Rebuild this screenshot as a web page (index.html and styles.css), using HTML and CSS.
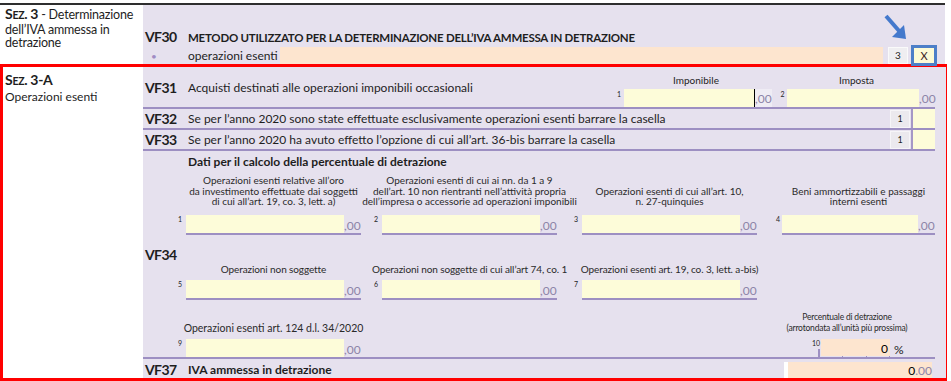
FILE: index.html
```html
<!DOCTYPE html>
<html lang="it">
<head>
  <meta charset="UTF-8">
  <title>Quadro VF - Sez. 3</title>
  <link rel="stylesheet" href="styles.css">
</head>
<body>
<div class="page">

  <div class="sec sec3">
    <div class="side side3">
      <b class="sez">S<span class="sc">EZ</span>. 3</b> - Determinazione<br>dell’IVA ammessa in<br>detrazione
    </div>
    <div class="body body3">
      <div class="r30">
        <span class="code">VF30</span>
        <span class="title">METODO UTILIZZATO PER LA DETERMINAZIONE DELL’IVA AMMESSA IN DETRAZIONE</span>
        <span class="dot">•</span>
        <div class="r30-line">
          <span class="r30-txt">operazioni esenti</span>
          <span class="peach-bar"></span>
          <span class="box-num">3</span>
          <span class="box-x">X</span>
        </div>
      </div>
    </div>
    <svg class="arrow" width="30" height="30" viewBox="0 0 30 30">
      <line x1="6" y1="4" x2="20" y2="20" stroke="#4479cc" stroke-width="4"/>
      <polygon points="26,27 12,25 24,13" fill="#4479cc"/>
    </svg>
  </div>

  <div class="sec sec3a">
    <div class="side side3a">
      <div><b class="sez">S<span class="sc">EZ</span>. 3-A</b></div>
      <div class="side-sub">Operazioni esenti</div>
    </div>
    <div class="body body3a">

      <div class="row r31">
        <span class="code">VF31</span>
        <span class="desc">Acquisti destinati alle operazioni imponibili occasionali</span>
        <div class="grp grp1">
          <div class="grp-head">Imponibile</div>
          <div class="inp">
            <span class="n">1</span>
            <span class="fld fld-cursor"></span>
            <span class="dec">,00</span>
          </div>
        </div>
        <div class="grp grp2">
          <div class="grp-head">Imposta</div>
          <div class="inp">
            <span class="n">2</span>
            <span class="fld"></span>
            <span class="dec">,00</span>
          </div>
        </div>
      </div>

      <div class="row r32">
        <span class="code">VF32</span>
        <span class="desc">Se per l’anno 2020 sono state effettuate esclusivamente operazioni esenti barrare la casella</span>
        <span class="chk-num">1</span>
        <span class="chk"></span>
      </div>

      <div class="row r32">
        <span class="code">VF33</span>
        <span class="desc">Se per l’anno 2020 ha avuto effetto l’opzione di cui all’art. 36-bis barrare la casella</span>
        <span class="chk-num">1</span>
        <span class="chk"></span>
      </div>

      <div class="row r34">
        <div class="r34-head">Dati per il calcolo della percentuale di detrazione</div>

        <div class="fgrid fgrid-a">
          <div class="cell">
            <div class="lbl"><span>Operazioni esenti relative all’oro<br>da investimento effettuate dai soggetti<br>di cui all’art. 19, co. 3, lett. a)</span></div>
            <div class="inp"><span class="n">1</span><span class="box"><span class="fld"></span><span class="dec">,00</span></span></div>
          </div>
          <div class="cell">
            <div class="lbl"><span>Operazioni esenti di cui ai nn. da 1 a 9<br>dell’art. 10 non rientranti nell’attività propria<br>dell’impresa o accessorie ad operazioni imponibili</span></div>
            <div class="inp"><span class="n">2</span><span class="box"><span class="fld"></span><span class="dec">,00</span></span></div>
          </div>
          <div class="cell">
            <div class="lbl"><span>Operazioni esenti di cui all’art. 10,<br>n. 27-quinquies</span></div>
            <div class="inp"><span class="n">3</span><span class="box"><span class="fld"></span><span class="dec">,00</span></span></div>
          </div>
          <div class="cell cell4">
            <div class="lbl"><span>Beni ammortizzabili e passaggi<br>interni esenti</span></div>
            <div class="inp"><span class="n">4</span><span class="box"><span class="fld"></span><span class="dec">,00</span></span></div>
          </div>
        </div>

        <div class="code code34">VF34</div>

        <div class="fgrid fgrid-b">
          <div class="cell">
            <div class="lbl lbl-lg"><span>Operazioni non soggette</span></div>
            <div class="inp"><span class="n">5</span><span class="box"><span class="fld"></span><span class="dec">,00</span></span></div>
          </div>
          <div class="cell">
            <div class="lbl lbl-lg"><span>Operazioni non soggette di cui all’art 74, co. 1</span></div>
            <div class="inp"><span class="n">6</span><span class="box"><span class="fld"></span><span class="dec">,00</span></span></div>
          </div>
          <div class="cell">
            <div class="lbl lbl-lg"><span>Operazioni esenti art. 19, co. 3, lett. a-bis)</span></div>
            <div class="inp"><span class="n">7</span><span class="box"><span class="fld"></span><span class="dec">,00</span></span></div>
          </div>
        </div>

        <div class="fgrid fgrid-c">
          <div class="cell">
            <div class="lbl lbl-lg"><span>Operazioni esenti art. 124 d.l. 34/2020</span></div>
            <div class="inp"><span class="n">9</span><span class="box box-flat"><span class="fld"></span><span class="dec">,00</span></span></div>
          </div>
          <div class="cell"></div>
          <div class="cell"></div>
          <div class="cell cell4">
            <div class="lbl lbl-pct"><span>Percentuale di detrazione<br>(arrotondata all’unità più prossima)</span></div>
            <div class="inp inp-pct">
              <span class="n n-pct">10</span>
              <span class="pct-wrap"><span class="pct-fld">0</span></span>
              <span class="pct-sign">%</span>
            </div>
          </div>
        </div>
      </div>

      <div class="row r37">
        <span class="code">VF37</span>
        <span class="desc desc-b">IVA ammessa in detrazione</span>
        <span class="tot"><span class="tot-int">0</span><span class="tot-dec">.00</span></span>
      </div>

    </div>
  </div>

</div>
</body>
</html>
```

FILE: styles.css
```css
body { margin: 0; background: #fff; font-family: Lato, "Liberation Sans", sans-serif; color: #1e1e1e; }
.page { position: relative; width: 947px; padding-top: 3px; }

.sec { display: grid; grid-template-columns: 143px 1fr; }
.sec3 { width: 945px; height: 59px; border-top: 2px solid #2e2e2e; }
.sec3a {
  box-sizing: border-box;
  width: 947px;
  height: 317px;
  border: 3px solid #ff0000;
  grid-template-columns: 140px 1fr;
}

.side { background: #fff; font-size: 13px; white-space: nowrap; }
.side3 { padding: 2px 0 0 5px; font-size: 12.5px; line-height: 13.5px; letter-spacing: -0.2px; }
.side3a { padding: 5px 0 0 2px; line-height: 16px; }
.side-sub { font-size: 12px; }
.sez { font-size: 14px; letter-spacing: -0.3px; }
.sc { font-size: 10.5px; }

.body { background: #e6e1ee; }
.code { font-weight: bold; font-size: 14px; line-height: 16px; padding-left: 2px; letter-spacing: -0.6px; }

/* section 3 */
.body3 { padding-top: 22px; }
.r30 {
  display: grid;
  grid-template-columns: 45px 1fr;
  grid-template-rows: 20px 17px;
  align-items: center;
}
.r30 .title { font-weight: bold; font-size: 11.5px; letter-spacing: -0.25px; }
.dot { color: #a08cc4; font-size: 10px; padding-left: 8px; }
.r30-line { display: flex; align-items: stretch; height: 17px; }
.r30-txt { width: 92px; font-size: 12px; line-height: 17px; }
.peach-bar { width: 603px; background: #fde5cf; }
.box-num {
  width: 18px;
  margin-left: 5px;
  background: #efeef1;
  border: 1px solid #fafafa;
  font-size: 10px;
  text-align: center;
  line-height: 15px;
}
.box-x {
  width: 20px;
  height: 15px;
  margin: -2px 0 -3px 3px;
  background: #fdfbd6;
  border: 3px solid #4d7fc8;
  font-size: 11px;
  text-align: center;
  line-height: 16px;
  color: #3b2222;
}
.arrow { position: absolute; left: 880px; top: 12px; }

/* section 3-A */
.body3a { padding-right: 11px; display: flex; flex-direction: column; }
.row { display: flex; border-bottom: 2px solid #9d8fc2; }
.row > .code { width: 43px; flex: none; }
.desc { flex: 1; font-size: 12px; line-height: 16px; }
.desc-b { font-weight: bold; }

.r31 { height: 40px; }
.r31 .code, .r31 .desc { padding-top: 13px; }
.grp { display: flex; flex-direction: column; }
.grp1 { width: 164px; }
.grp2 { width: 157px; }
.grp-head { font-size: 10px; line-height: 12px; text-align: center; margin-top: 7px; }
.grp .inp { margin-top: auto; display: flex; height: 18px; }
.grp .n { width: 10px; font-size: 7px; line-height: 10px; text-align: center; }
.grp2 .n { width: 9px; }
.grp .fld { background: #fdfcd9; width: 130px; }
.grp2 .fld { width: 132px; }
.fld-cursor { border-right: 1px solid #000; }
.grp .dec { width: 17px; background: #efecf4; font-size: 12px; line-height: 20px; color: #8c84a8; }
.grp2 .dec { width: 16px; background: none; }

.r32 { height: 19px; align-items: center; }
.r32 .desc { line-height: 19px; }
.chk-num {
  width: 18px;
  height: 16px;
  background: #ebe9ee;
  border: 1px solid #f6f5f8;
  font-size: 9px;
  line-height: 16px;
  text-align: center;
}
.chk { align-self: stretch; width: 22px; margin-left: 1px; background: #fdfcd9; border-left: 2px solid #a597c6; }

.r34 { height: 206px; flex-direction: column; }
.r34-head { padding: 3px 0 0 45px; font-weight: bold; font-size: 12px; line-height: 16px; height: 16px; }

.fgrid {
  display: grid;
  grid-template-columns: 196px 200px 204px 1fr;
  padding-left: 33px;
  align-items: end;
}
.fgrid-a { margin-top: 5px; }
.fgrid-c { margin-top: auto; }
.cell { display: flex; flex-direction: column; }
.lbl {
  display: flex;
  justify-content: center;
  margin-left: 10px;
  width: 175px;
  font-size: 10px;
  line-height: 10.5px;
  text-align: center;
  white-space: nowrap;
  margin-bottom: 8px;
  color: #2a2a2a;
}
.lbl-lg { font-size: 10px; line-height: 12px; margin-bottom: 5px; letter-spacing: -0.1px; }
.fgrid-c .lbl-lg { font-size: 10.5px; margin-bottom: 5px; letter-spacing: 0; }
.cell .inp { display: flex; }
.cell .n { width: 10px; font-size: 7px; line-height: 9px; padding-left: 2px; box-sizing: border-box; }
.box { display: flex; width: 175px; height: 18px; border-bottom: 2px solid #9d8fc2; }
.box-flat { border-bottom: none; }
.box .fld { flex: 1; background: #fdfcd9; }
.box .dec { width: 17px; font-size: 12px; line-height: 22px; color: #8c84a8; }
.cell4 .lbl { margin-left: 6px; width: 153px; }
.cell4 .n { width: 6px; padding-left: 0; }
.cell4 .box { width: 153px; }

.code34 { margin-top: 12px; }

.lbl-pct { font-size: 8.5px; line-height: 11px; margin-bottom: 5px; letter-spacing: -0.2px; }
.cell4 .lbl-pct { width: 150px; margin-left: -4px; }
.inp-pct { padding-left: 36px; height: 18px; }
.n-pct { width: 11px; font-size: 7px; }
.pct-wrap {
  width: 72px;
  padding-bottom: 1px;
  background:
    linear-gradient(#9d8fc2, #9d8fc2) 0 100% / 2px 8px no-repeat,
    linear-gradient(#9d8fc2, #9d8fc2) 24px 100% / 1px 3px no-repeat,
    linear-gradient(#9d8fc2, #9d8fc2) 48px 100% / 1px 3px no-repeat,
    linear-gradient(#9d8fc2, #9d8fc2) 71px 100% / 1px 3px no-repeat;
}
.pct-fld {
  display: block;
  margin-left: 3px;
  height: 17px;
  background: #fde5cf;
  text-align: right;
  font-size: 12px;
  line-height: 20px;
  padding-right: 2px;
  color: #000;
}
.pct-sign { margin-left: 4px; font-size: 12px; line-height: 22px; }

.r37 { border-bottom: none; height: 19px; align-items: center; }
.r37 .desc { padding-top: 2px; }
.r37 .code { padding-top: 2px; }
.tot {
  align-self: flex-end;
  width: 144px;
  height: 16px;
  margin-right: 3px;
  background: #fde5cf;
  border-left: 4px solid #fff;
  text-align: right;
  font-size: 12px;
  line-height: 18px;
}
.tot-int { color: #000; }
.tot-dec { color: #8c84a8; }
```
